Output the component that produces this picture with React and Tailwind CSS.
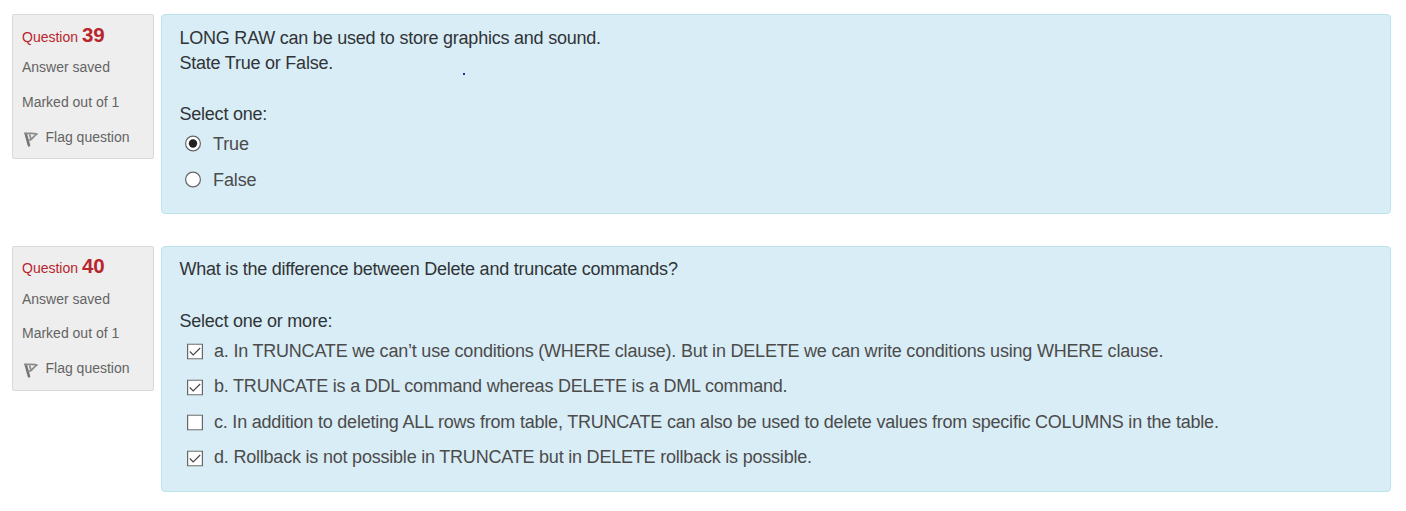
const Flag = () => (
  <svg className="ml-px mr-[7px] h-4 w-4 shrink-0 translate-y-0.5" viewBox="0 0 16 16" fill="none">
    <path d="M2.8 3 6 14.3" stroke="#757575" strokeWidth="2.6" strokeLinecap="round" />
    <path d="M1.2 2.2C5 3 10 1.4 14 3.1 11.6 4.4 10 7 7.6 8.8L5.2 9M6.6 3.6 7.8 7.8" stroke="#8b8b8b" strokeWidth="1.7" strokeLinejoin="round" />
  </svg>
);

const Info = ({ number, compact }) => (
  <aside className="h-[145px] w-[142px] shrink-0 rounded-[2px] border border-[#d9d9d9] bg-[#eeeeee] pl-[9px] text-sm text-[#646464]">
    <h3 className={`flex h-[26px] items-baseline leading-[26px] whitespace-pre text-[#b9252d] ${compact ? "mt-[6px]" : "mt-[7px]"}`}>
      Question <span className="text-[20.5px] font-bold">{number}</span>
    </h3>
    <div className={`h-5 leading-5 ${compact ? "mt-[10px]" : "mt-[9px]"}`}>Answer saved</div>
    <div className={`h-5 leading-5 ${compact ? "mt-[14px]" : "mt-[15px]"}`}>Marked out of 1</div>
    <div className="mt-[15px] -ml-[0.5px] flex h-5 items-center leading-5"><Flag />Flag question</div>
  </aside>
);

const Radio = ({ checked, label }) => (
  <label className="flex h-9 items-center text-[#4b4b4b]">
    <svg className="mr-[11.5px] ml-[5px] h-[17px] w-[17px] -translate-x-[0.5px] -translate-y-px" viewBox="0 0 17 17" role="radio" aria-checked={checked}>
      <circle cx="8.5" cy="8.5" r="7.4" fill="white" stroke="#666" strokeWidth="1.2" />
      {checked && <circle cx="8.5" cy="8.5" r="4.2" fill="#222" />}
    </svg>
    {label}
  </label>
);

const Check = ({ checked, label }) => (
  <label className="flex h-[35.5px] items-center whitespace-nowrap text-[#4b4b4b]">
    <svg className="mr-[11.5px] ml-[7px] h-4 w-4 shrink-0 translate-y-[0.5px]" viewBox="0 0 16 16" role="checkbox" aria-checked={checked}>
      <rect x=".6" y=".6" width="14.8" height="14.8" fill="white" stroke="#666" strokeWidth="1.2" />
      {checked && <path d="m2.8 8 3.4 3.5 7-7" fill="none" stroke="#444" strokeWidth="1.1" />}
    </svg>
    {label}
  </label>
);

const options = [
  [true, "a. In TRUNCATE we can’t use conditions (WHERE clause). But in DELETE we can write conditions using WHERE clause."],
  [true, "b. TRUNCATE is a DDL command whereas DELETE is a DML command."],
  [false, "c. In addition to deleting ALL rows from table, TRUNCATE can also be used to delete values from specific COLUMNS in the table."],
  [true, "d. Rollback is not possible in TRUNCATE but in DELETE rollback is possible."],
];

export default function App() {
  return (
    <main className="flex h-[511px] flex-col gap-8 bg-white pt-[14px] pl-3 font-['Liberation_Sans',Arial,sans-serif]">
      <section className="flex items-start gap-[7px]">
        <Info number="39" />
        <div className="relative h-[200px] w-[1230px] rounded border border-[#bce3ec] bg-[#d9edf6] pt-[11px] pl-[17.5px] text-[18px] tracking-[-0.23px] text-[#303437]">
          <p className="leading-[25px]">LONG RAW can be used to store graphics and sound.<br />State True or False.</p>
          <p className="mt-[25px] h-[26px] leading-[26px]">Select one:</p>
          <div className="mt-[-1px] tracking-[-0.1px]">
            <Radio checked label="True" />
            <Radio checked={false} label="False" />
          </div>
          <span className="absolute top-[58px] left-[301px] h-[2px] w-[2px] bg-[#2626a8]" />
        </div>
      </section>
      <section className="flex items-start gap-[7px]">
        <Info number="40" compact />
        <div className="h-[246px] w-[1230px] rounded border border-[#bce3ec] bg-[#d9edf6] pt-[9px] pl-[17.5px] text-[18px] tracking-[-0.23px] text-[#303437]">
          <p className="h-[26px] leading-[26px]">What is the difference between Delete and truncate commands?</p>
          <p className="mt-[26px] h-[26px] leading-[26px]">Select one or more:</p>
          <div className="-mt-[0.5px] tracking-[-0.21px]">
            {options.map(([checked, label]) => <Check key={label} checked={checked} label={label} />)}
          </div>
        </div>
      </section>
    </main>
  );
}
